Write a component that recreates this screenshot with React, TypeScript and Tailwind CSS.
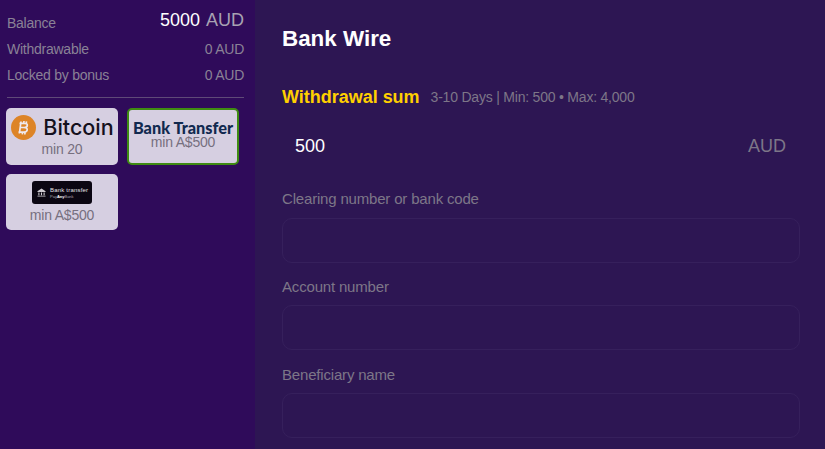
export default function App() {
  const field = (label: string, inputClass: string) => (
    <div className="flex flex-col">
      <div className="h-[20px] text-[15px] leading-[20px] tracking-[-0.18px] text-[#7d7688]">{label}</div>
      <div className={inputClass} />
    </div>
  );
  return (
    <div className="flex h-[449px] w-[825px] overflow-hidden font-['Liberation_Sans',Arial,sans-serif]">
      <aside className="flex w-[255px] shrink-0 flex-col bg-[#2f0b5a] px-[7px] pt-[9px]">
        <div className="flex h-[26px] items-center justify-between">
          <span className="mt-[3px] text-[14px] tracking-[-0.25px] text-[#8a8296]">Balance</span>
          <span className="mb-[4px] flex items-center gap-[6px] pr-[4px] text-[18px]">
            <span className="text-white">5000</span>
            <span className="text-[#a8a2b2]">AUD</span>
          </span>
        </div>
        <div className="mt-[1px] flex h-[26px] items-center justify-between pr-[4px] text-[14px] tracking-[-0.25px] text-[#8a8296]">
          <span>Withdrawable</span>
          <span>0 AUD</span>
        </div>
        <div className="flex h-[26px] items-center justify-between pr-[4px] text-[14px] tracking-[-0.25px] text-[#8a8296]">
          <span>Locked by bonus</span>
          <span>0 AUD</span>
        </div>
        <div className="mt-[9px] mr-[4px] h-px bg-[#5f4a78]" />
        <div className="mt-[10px] -ml-[1px] grid grid-cols-[112px_113px] gap-x-[9px] gap-y-[9px]">
          <button className="flex h-[57px] flex-col items-center rounded-[5px] bg-[#d6cfe1] pt-[7px]">
            <span className="flex h-[25px] items-center gap-[7px] pl-[1px]">
              <svg width="25" height="25" viewBox="0 0 25 25">
                <circle cx="12.5" cy="12.5" r="12.5" fill="#dd8427" />
                <path
                  d="M10 6.5l-1.6 12M13 6l-.3 2.2M15.5 6.4l-.3 2.2M11.6 17l-.3 2.3M14.1 17.2l-.3 2.3M8.5 8.3h5c2 0 3 1 2.8 2.2-.2 1.3-1.2 2-3 2H9.5m3.300 0c2.400 0 3.600 1 3.400 2.400-.2 1.500-1.600 2.300-3.600 2.300H7.500"
                  fill="none"
                  stroke="#efe9ee"
                  strokeWidth="1.700"
                />
              </svg>
              <span className="font-['Inter',sans-serif] text-[21.5px] leading-[25px] font-medium text-[#14101c]">Bitcoin</span>
            </span>
            <span className="mt-[1px] text-[14px] leading-[16px] tracking-[-0.2px] text-[#77707f]">min 20</span>
          </button>
          <button className="flex h-[57px] w-[112px] flex-col items-center rounded-[5px] border-2 border-[#3f8b12] bg-[#d6cfe1] pt-[10px]">
            <span className="font-['Lato',sans-serif] text-[16.3px] leading-[16px] font-black whitespace-nowrap text-[#11294f]">Bank Transfer</span>
            <span className="text-[14px] leading-[12px] tracking-[-0.2px] text-[#77707f]">min A$500</span>
          </button>
          <button className="flex h-[56px] flex-col items-center rounded-[5px] bg-[#d6cfe1] pt-[7px]">
            <span className="flex h-[23px] w-[60px] items-center gap-[4px] rounded-[3px] bg-[#0b0612] pl-[5px]">
              <svg width="9" height="9" viewBox="0 0 10 10" fill="#cfcbd2">
                <path d="M5 0.500L9.500 3.500V4.500H0.500V3.500zM1.500 5h1.200v3H1.500zM4.400 5h1.200v3H4.400zM7.300 5h1.200v3H7.300zM0.500 8.500h9v1h-9z" />
              </svg>
              <span className="flex flex-col items-start">
                <span className="text-[6px] leading-[8px] tracking-[0.2px] whitespace-nowrap text-[#e6e3e9]">Bank transfer</span>
                <span className="text-[4px] leading-[6px] whitespace-nowrap text-[#a9a5ad]">Pay<b className="text-white">Any</b>Bank</span>
              </span>
            </span>
            <span className="mt-[3px] text-[14px] leading-[16px] tracking-[-0.2px] text-[#77707f]">min A$500</span>
          </button>
        </div>
      </aside>
      <main className="flex min-w-0 flex-1 flex-col bg-[#2d1653] pr-[25px] pl-[27px]">
        <h1 className="mt-[26px] h-[26px] text-[22.4px] leading-[26px] font-bold text-white">Bank Wire</h1>
        <div className="mt-[33px] flex h-[24px] items-center gap-[11px]">
          <span className="text-[18px] font-bold tracking-[-0.02px] text-[#ffcf00]">Withdrawal sum</span>
          <span className="mt-[1px] text-[14px] tracking-[-0.21px] text-[#7d7688]">3-10 Days | Min: 500 • Max: 4,000</span>
        </div>
        <div className="mt-[25px] flex h-[24px] items-center justify-between pr-[14px] pl-[13px] text-[18px]">
          <span className="text-white">500</span>
          <span className="text-[#7d7688]">AUD</span>
        </div>
        <div className="mt-[31px] flex flex-col">
          {field("Clearing number or bank code", "mt-[9px] h-[45px] rounded-[10px] border border-[#36205c]")}
          <div className="mt-[14px]">{field("Account number", "mt-[8px] h-[45px] rounded-[10px] border border-[#36205c]")}</div>
          <div className="mt-[15px]">{field("Beneficiary name", "mt-[8px] h-[45px] rounded-[10px] border border-[#36205c]")}</div>
        </div>
      </main>
    </div>
  );
}
